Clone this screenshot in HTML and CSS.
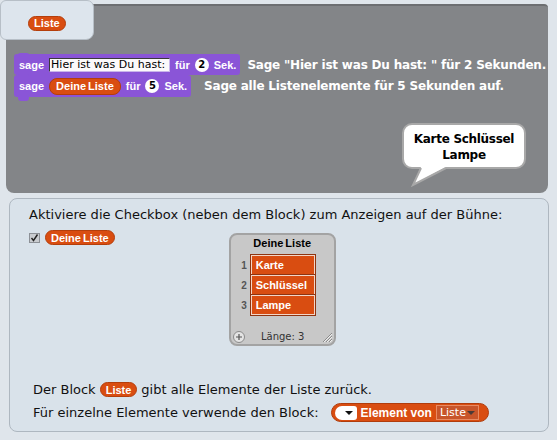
FILE: index.html
```html
<!DOCTYPE html>
<html lang="de">
<head>
<meta charset="utf-8">
<title>Listen</title>
<link rel="stylesheet" href="styles.css">
</head>
<body>
<div class="app">
  <div class="tab"><span class="rep">Liste</span></div>

  <section class="stage">
    <div class="script">
      <div class="row">
        <div class="block">
          <span class="lbl">sage</span>
          <span class="input">Hier ist was Du hast:</span>
          <span class="lbl">für</span>
          <span class="num">2</span>
          <span class="lbl">Sek.</span>
        </div>
        <p class="note note1">Sage "Hier ist was Du hast: " für 2 Sekunden.</p>
      </div>
      <div class="row">
        <div class="block last">
          <span class="lbl">sage</span>
          <span class="rep tall">Deine Liste</span>
          <span class="lbl">für</span>
          <span class="num">5</span>
          <span class="lbl">Sek.</span>
        </div>
        <p class="note note2">Sage alle Listenelemente für 5 Sekunden auf.</p>
      </div>
    </div>

    <div class="bubble">
      <p class="bubble-text">Karte Schlüssel<br>Lampe</p>
      <svg class="tail" width="40" height="20" viewBox="0 0 40 20">
        <polygon points="13,0 5,18 38,0" fill="#fff"/>
        <polyline points="13,1 5,18 38,1" fill="none" stroke="#a8a8a8" stroke-width="2"/>
      </svg>
    </div>
  </section>

  <section class="panel">
    <p class="heading">Aktiviere die Checkbox (neben dem Block) zum Anzeigen auf der Bühne:</p>

    <div class="checkrow">
      <div class="checkitem">
        <svg class="checkbox" width="11" height="10" viewBox="0 0 11 10">
          <rect x="0.5" y="0.5" width="10" height="9" fill="#c9ccd0" stroke="#8c9096"/>
          <polyline points="2.5,5 4.5,7.5 8.5,1.5" fill="none" stroke="#222" stroke-width="1.4"/>
        </svg>
        <span class="rep">Deine Liste</span>
      </div>

      <div class="watcher">
        <div class="w-title">Deine Liste</div>
        <div class="w-items">
          <div class="w-item"><span class="idx">1</span><span class="cell">Karte</span></div>
          <div class="w-item"><span class="idx">2</span><span class="cell">Schlüssel</span></div>
          <div class="w-item"><span class="idx">3</span><span class="cell">Lampe</span></div>
        </div>
        <div class="w-foot">
          <svg class="plus" width="12" height="12" viewBox="0 0 12 12">
            <circle cx="6" cy="6" r="5.5" fill="#e4e4e4" stroke="#8a8a8a"/>
            <path d="M3 6h6M6 3v6" stroke="#555" stroke-width="1.2"/>
          </svg>
          <span class="len">Länge: 3</span>
          <svg class="grip" width="12" height="12" viewBox="0 0 12 12">
            <path d="M2 11L11 2M5 11L11 5M8 11L11 8" stroke="#8a8a8a" stroke-width="1"/>
            <path d="M3 11L11 3M6 11L11 6M9 11L11 9" stroke="#eee" stroke-width="1"/>
          </svg>
        </div>
      </div>
    </div>

    <div class="line first"><span>Der Block</span><span class="rep inl">Liste</span><span>gibt alle Elemente der Liste zurück.</span></div>
    <div class="line"><span>Für einzelne Elemente verwende den Block:</span><span class="eblock"><span class="dd-white"><span class="tri"></span></span><span class="elbl">Element von</span><span class="dd-list">Liste<span class="tri dark"></span></span></span></div>
  </section>
</div>
</body>
</html>
```

FILE: styles.css
```css
* { box-sizing: border-box; }
html, body { margin: 0; padding: 0; }
body {
  width: 557px;
  height: 440px;
  overflow: hidden;
  background: #dfe5eb;
  font-family: "DejaVu Sans", sans-serif;
}
.app {
  position: relative;
  width: 557px;
  height: 440px;
  padding-top: 4px;
}

/* reporter pill */
.rep {
  display: inline-flex;
  align-items: center;
  height: 15px;
  padding: 0 5px;
  border-radius: 8px;
  background: #d94d11;
  border: 1px solid #b43e0b;
  color: #fff;
  font: bold 11px "Liberation Sans", sans-serif;
  word-spacing: -1px;
  white-space: nowrap;
}
.rep.tall { height: 17px; padding: 0 6px; }

/* tab */
.tab {
  position: absolute;
  left: 0;
  top: 0;
  width: 94px;
  height: 40px;
  background: #dde5ed;
  border: 1px solid #b7bfc7;
  border-radius: 6px 7px 8px 6px;
  padding: 11px 0 0 27px;
  z-index: 2;
}

/* stage */
.stage {
  position: relative;
  margin: 0 9px 0 6px;
  height: 189px;
  background: #838588;
  border-top: 2px solid #6c6e71;
  border-radius: 4px 4px 8px 8px;
  padding: 48px 0 0 8px;
}
.script { display: flex; flex-direction: column; }
.row { display: flex; align-items: center; }
.block {
  position: relative;
  display: flex;
  align-items: center;
  gap: 5px;
  height: 21px;
  padding: 0 4px 0 5px;
  background: #8a55d7;
  border-radius: 3px;
  color: #fff;
  font: bold 11px "Liberation Sans", sans-serif;
}
.block::before {
  content: "";
  position: absolute;
  left: 4px;
  top: -1px;
  width: 11px;
  height: 2px;
  background: #8a55d7;
  border-radius: 2px 2px 0 0;
}
.block.last { height: 22px; }
.block.last::after {
  content: "";
  position: absolute;
  left: 4px;
  bottom: -4px;
  width: 11px;
  height: 4px;
  background: #8a55d7;
  border-radius: 0 0 3px 3px;
}
.input {
  width: 121px;
  height: 14px;
  background: #fcf9fb;
  border: 1px solid #c9b6ea;
  border-top-color: #3a3a3a;
  border-left-color: #3a3a3a;
  color: #000;
  font: 11px/12px "DejaVu Sans", sans-serif;
  padding-left: 1px;
  white-space: nowrap;
  overflow: hidden;
}
.num {
  width: 14px;
  height: 14px;
  border-radius: 7px;
  background: #fff;
  color: #000;
  font: bold 10px/14px "DejaVu Sans", sans-serif;
  text-align: center;
}
.note {
  margin: 0;
  color: #fff;
  font: bold 12px "DejaVu Sans", sans-serif;
  letter-spacing: -0.2px;
  white-space: nowrap;
}
.note1 { margin-left: 7px; }
.note2 { margin-left: 13px; }

/* speech bubble (sprite on the stage canvas) */
.bubble {
  position: absolute;
  left: 396px;
  top: 117px;
  width: 124px;
  height: 46px;
  background: #fff;
  border: 2px solid #a8a8a8;
  border-radius: 10px;
}
.bubble-text {
  margin: 0;
  padding-top: 6px;
  text-align: center;
  font: bold 12px/16px "DejaVu Sans", sans-serif;
  letter-spacing: -0.3px;
  color: #000;
}
.tail {
  position: absolute;
  left: 4px;
  top: 42px;
}

/* lower panel */
.panel {
  margin: 5px 8px 0 9px;
  height: 234px;
  background: #d9e2ea;
  border: 1px solid #aeb7c0;
  border-radius: 8px;
  padding: 8px 0 0 19px;
  font: 13px/16px "DejaVu Sans", sans-serif;
  color: #111;
}
.heading { margin: 0; white-space: nowrap; }
.checkrow { display: flex; align-items: flex-start; margin-top: 7px; }
.checkitem { display: flex; align-items: flex-start; gap: 5px; }
.checkbox { margin-top: 3px; }

.watcher {
  display: flex;
  flex-direction: column;
  margin: 3px 0 0 114px;
  width: 107px;
  height: 113px;
  background: #c8c8c8;
  border: 2px solid #a3a3a3;
  border-radius: 8px;
}
.w-title {
  text-align: center;
  font: bold 11px/16px "Liberation Sans", sans-serif;
  word-spacing: -1px;
  color: #000;
}
.w-items { margin-top: 4px; display: flex; flex-direction: column; }
.w-item { display: flex; align-items: center; height: 20px; gap: 4px; }
.idx {
  width: 16px;
  text-align: right;
  font: bold 10px "Liberation Sans", sans-serif;
  color: #555;
}
.cell {
  width: 64px;
  height: 20px;
  background: #d94d11;
  border: 1px solid #f3d6c8;
  box-shadow: 0 0 0 1px #8e3410;
  color: #fff;
  font: bold 11px/18px "Liberation Sans", sans-serif;
  padding-left: 4px;
}
.w-foot {
  margin-top: auto;
  display: flex;
  align-items: center;
  height: 14px;
  padding: 0 1px 1px 2px;
}
.len {
  flex: 1;
  text-align: center;
  font: 10px "DejaVu Sans", sans-serif;
  color: #333;
}

.line {
  display: flex;
  align-items: center;
  height: 23px;
  margin-left: 4px;
  white-space: nowrap;
}
.line.first { margin-top: 32px; }
.rep.inl { margin: 0 4px; }

.eblock {
  display: inline-flex;
  align-items: center;
  gap: 4px;
  height: 19px;
  margin-left: 12px;
  padding: 0 9px 0 3px;
  background: #d94d11;
  border: 1px solid #b03c0c;
  border-radius: 10px;
  white-space: nowrap;
}
.dd-white {
  position: relative;
  width: 22px;
  height: 14px;
  background: #fff;
  border-radius: 7px 3px 3px 7px;
}
.tri {
  position: absolute;
  right: 4px;
  top: 5px;
  width: 0;
  height: 0;
  border-left: 4px solid transparent;
  border-right: 4px solid transparent;
  border-top: 4px solid #111;
}
.elbl {
  color: #fff;
  font: bold 12px "Liberation Sans", sans-serif;
}
.dd-list {
  position: relative;
  width: 43px;
  height: 15px;
  background: #c8552a;
  border: 1px solid #e88a62;
  color: #fff;
  font: 11px/13px "DejaVu Sans", sans-serif;
  padding-left: 3px;
}
.tri.dark { border-top-color: #4a3a36; right: 3px; top: 5px; }
```
